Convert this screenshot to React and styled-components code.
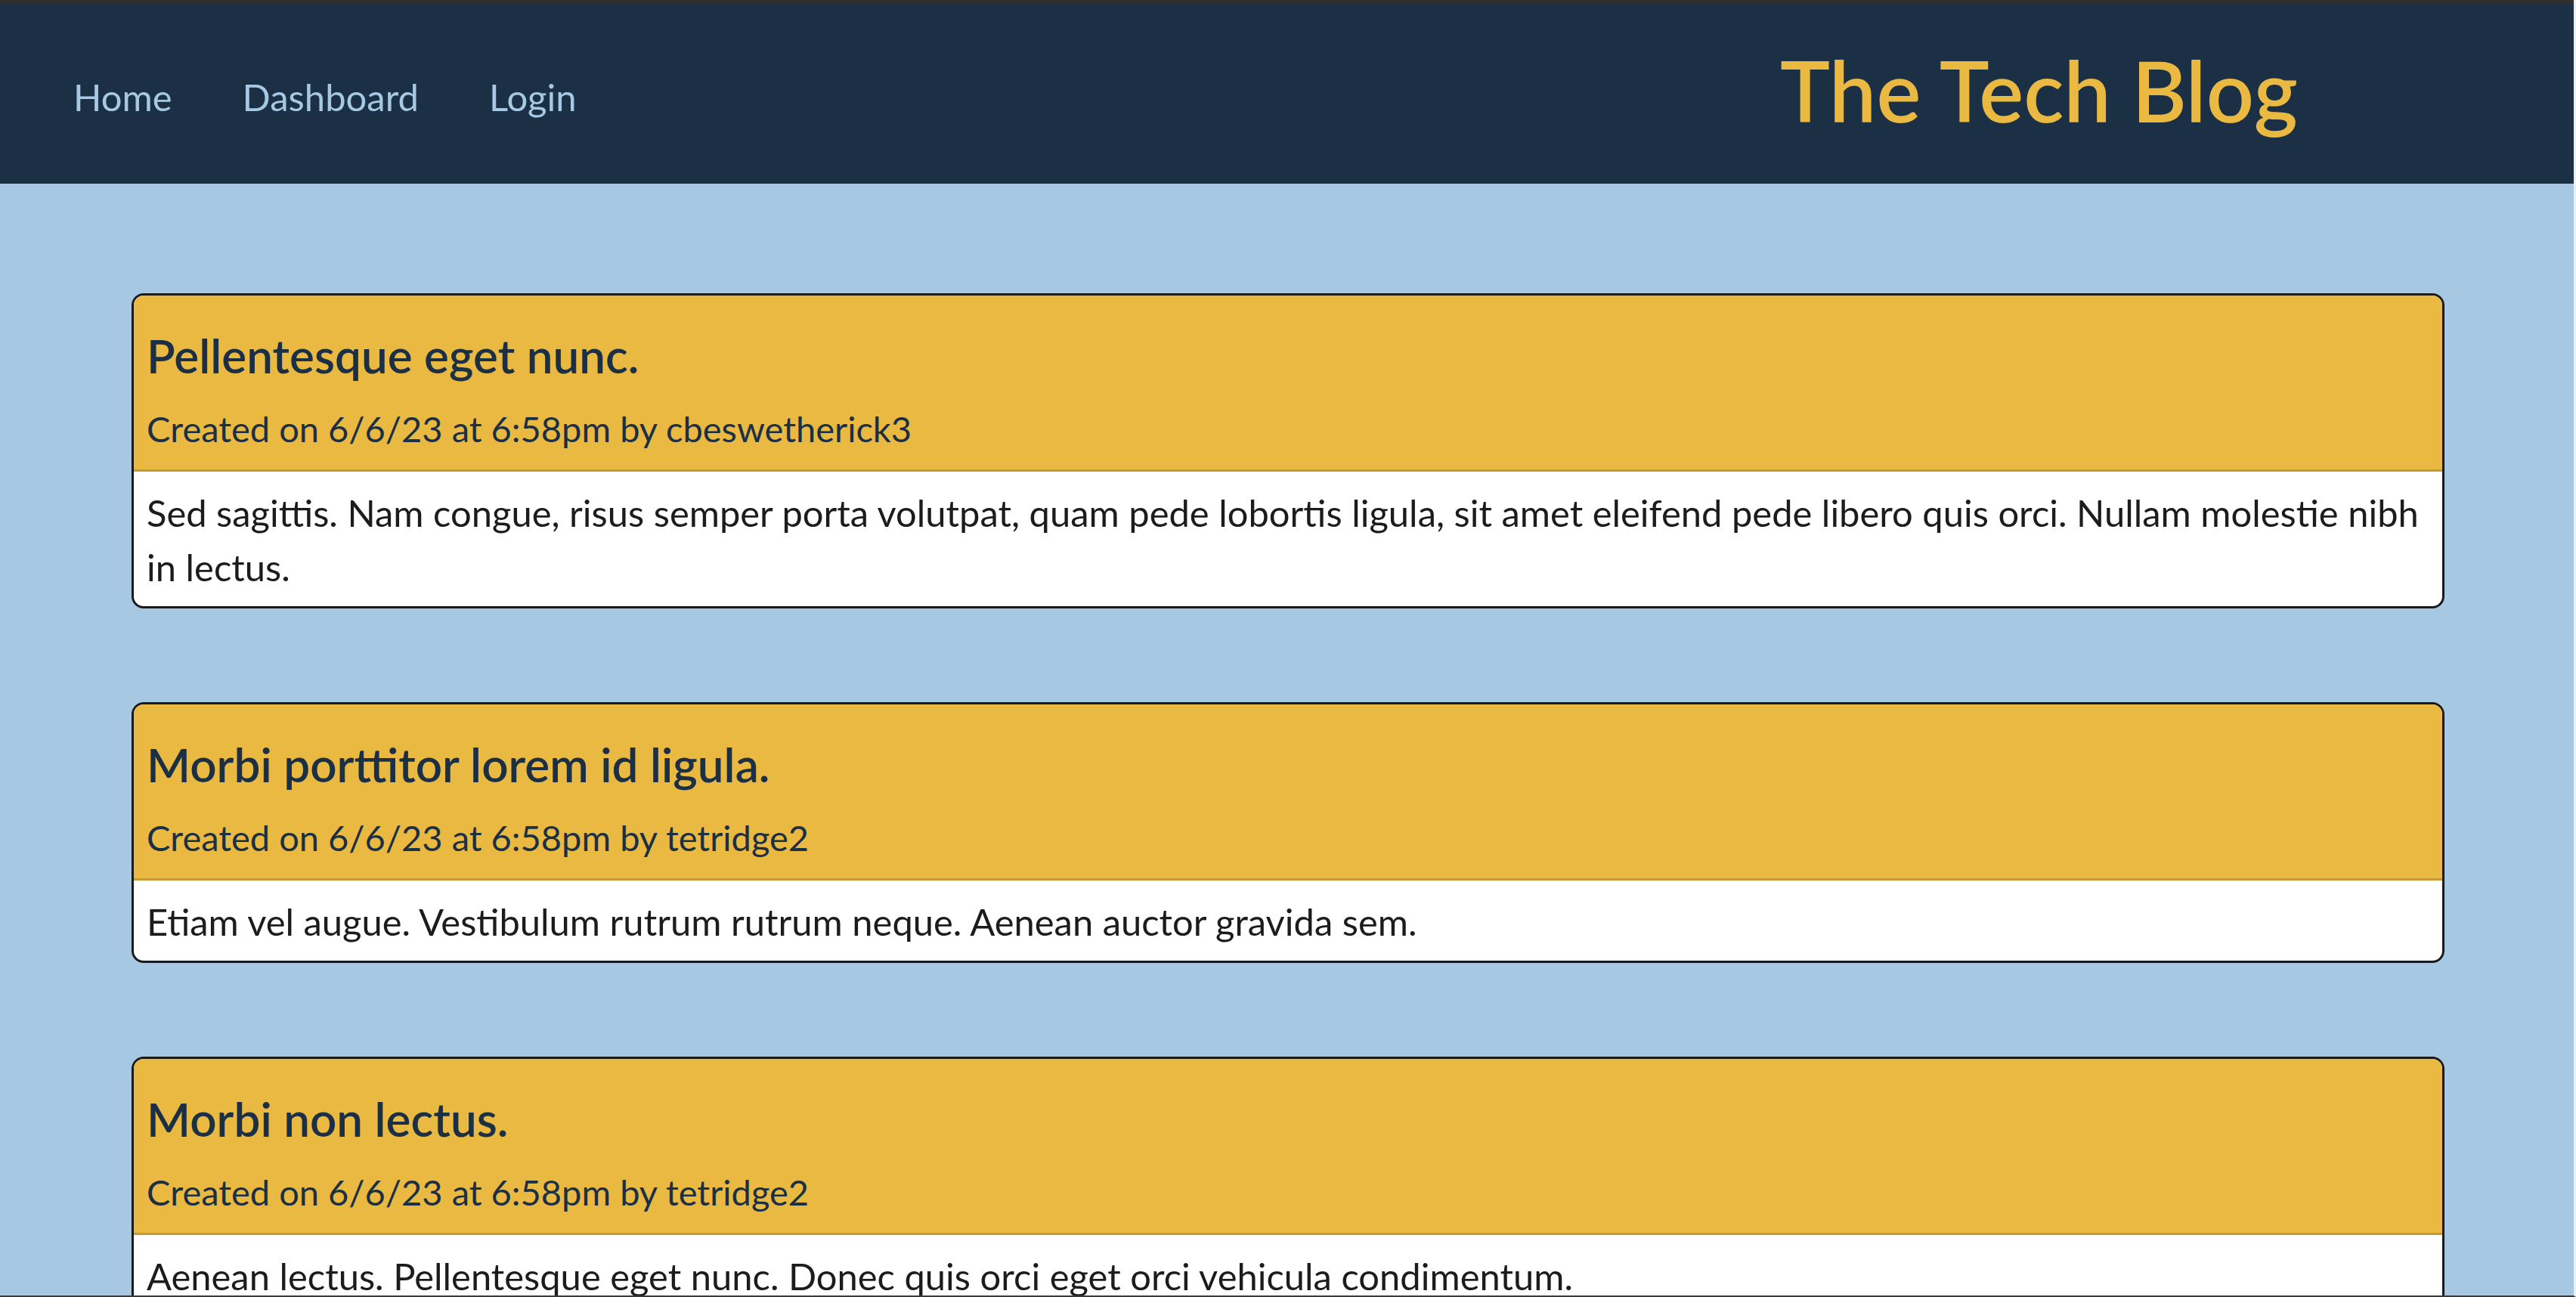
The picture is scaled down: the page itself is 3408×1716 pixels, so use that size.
import React from 'react';
import styled, { createGlobalStyle } from 'styled-components';

const GlobalStyle = createGlobalStyle`
  * {
    box-sizing: border-box;
  }
  body {
    margin: 0;
    border-top: 6px solid #2e2e2e;
    background-color: #a6c8e2;
    font-family: Lato, "Liberation Sans", sans-serif;
  }
  body::after {
    content: '';
    position: fixed;
    inset: 0;
    border-right: 3px solid #efefef;
    border-bottom: 2px solid #3a3a3a;
    pointer-events: none;
  }
`;

const NavBar = styled.header`
  display: flex;
  align-items: center;
  justify-content: space-between;
  height: 237px;
  padding: 8px 368px 0 97px;
  background-color: #1b2f45;
`;

const NavLinks = styled.nav`
  display: flex;
  align-items: center;
  gap: 93px;
`;

const NavLink = styled.a`
  font-size: 49px;
  line-height: 1.2;
  color: #a6c8e2;
  text-decoration: none;
`;

const SiteTitle = styled.h1`
  margin: 0 0 18px;
  font-size: 111px;
  font-weight: 600;
  line-height: 1.2;
  color: #e9b942;
`;

const Main = styled.main`
  display: flex;
  flex-direction: column;
  gap: 124px;
  padding: 145px 174px 80px;
`;

const PostCard = styled.article`
  border: 3px solid #1a1a1a;
  border-radius: 16px;
  overflow: hidden;
  background-color: #ffffff;
`;

const PostHeader = styled.div`
  padding: 42px 17px 16px;
  background-color: #e9b942;
  border-bottom: 3px solid #c59b35;
  color: #1b2f45;
`;

const PostTitle = styled.h2`
  margin: 0 0 24px;
  font-size: 62px;
  font-weight: 600;
  line-height: 1.2;
`;

const PostMeta = styled.p`
  margin: 0;
  font-size: 47px;
  line-height: 73.5px;
`;

const PostBody = styled.p`
  margin: 0;
  padding: 18px 17px 16px;
  font-size: 48.9px;
  line-height: 72px;
  color: #1c1c1c;
`;

const posts = [
  {
    id: 1,
    title: 'Pellentesque eget nunc.',
    date: '6/6/23',
    time: '6:58pm',
    author: 'cbeswetherick3',
    body: 'Sed sagittis. Nam congue, risus semper porta volutpat, quam pede lobortis ligula, sit amet eleifend pede libero quis orci. Nullam molestie nibh in lectus.',
  },
  {
    id: 2,
    title: 'Morbi porttitor lorem id ligula.',
    date: '6/6/23',
    time: '6:58pm',
    author: 'tetridge2',
    body: 'Etiam vel augue. Vestibulum rutrum rutrum neque. Aenean auctor gravida sem.',
  },
  {
    id: 3,
    title: 'Morbi non lectus.',
    date: '6/6/23',
    time: '6:58pm',
    author: 'tetridge2',
    body: 'Aenean lectus. Pellentesque eget nunc. Donec quis orci eget orci vehicula condimentum.',
  },
];

const App = () => (
  <>
    <GlobalStyle />
    <NavBar>
      <NavLinks>
        <NavLink href="#">Home</NavLink>
        <NavLink href="#">Dashboard</NavLink>
        <NavLink href="#">Login</NavLink>
      </NavLinks>
      <SiteTitle>The Tech Blog</SiteTitle>
    </NavBar>
    <Main>
      {posts.map(post => (
        <PostCard key={post.id}>
          <PostHeader>
            <PostTitle>{post.title}</PostTitle>
            <PostMeta>
              Created on {post.date} at {post.time} by {post.author}
            </PostMeta>
          </PostHeader>
          <PostBody>{post.body}</PostBody>
        </PostCard>
      ))}
    </Main>
  </>
);

export default App;
